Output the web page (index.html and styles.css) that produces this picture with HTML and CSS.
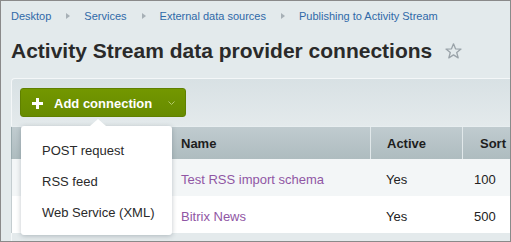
FILE: index.html
```html
<!DOCTYPE html>
<html>
<head>
<meta charset="utf-8">
<link rel="stylesheet" href="styles.css">
</head>
<body>
<div class="frame">
  <nav class="crumbs">
    <a class="crumb">Desktop</a><span class="sep"></span>
    <a class="crumb">Services</a><span class="sep"></span>
    <a class="crumb">External data sources</a><span class="sep"></span>
    <a class="crumb">Publishing to Activity Stream</a>
  </nav>
  <div class="title-row">
    <h1 class="title">Activity Stream data provider connections</h1>
    <svg class="star" width="17" height="16" viewBox="0 0 17 16"><path d="M8.5 0.8 L10.5 5.8 L16 6.1 L11.7 9.5 L13.2 14.9 L8.5 11.9 L3.8 14.9 L5.3 9.5 L1 6.1 L6.5 5.8 Z" fill="none" stroke="#9aa3a9" stroke-width="1.3" stroke-linejoin="round"/></svg>
  </div>
  <div class="panel">
    <div class="toolbar">
      <button class="add">
        <svg class="plus" width="11" height="11" viewBox="0 0 11 11"><path d="M4 0h3v4h4v3H7v4H4V7H0V4h4z" fill="#fff"/></svg>
        <span class="add-label">Add connection</span>
        <svg class="chev" width="7" height="4" viewBox="0 0 7 4"><polyline points="0.5,0.5 3.5,3.5 6.5,0.5" fill="none" stroke="#b3c96c" stroke-width="1"/></svg>
      </button>
    </div>
    <div class="table">
      <div class="row head">
        <div class="cell c0"></div>
        <div class="cell c-name">Name</div>
        <div class="cell c-active sepl">Active</div>
        <div class="cell c-sort sepl">Sort</div>
      </div>
      <div class="row odd">
        <div class="cell c0"></div>
        <div class="cell c-name"><a class="link">Test RSS import schema</a></div>
        <div class="cell c-active">Yes</div>
        <div class="cell c-num">100</div>
      </div>
      <div class="row even">
        <div class="cell c0"></div>
        <div class="cell c-name"><a class="link">Bitrix News</a></div>
        <div class="cell c-active">Yes</div>
        <div class="cell c-num">500</div>
      </div>
    </div>
    <div class="menu">
      <div class="item">POST request</div>
      <div class="item">RSS feed</div>
      <div class="item">Web Service (XML)</div>
    </div>
  </div>
</div>
</body>
</html>
```

FILE: styles.css
```css
html, body {
  margin: 0;
  padding: 0;
}
body {
  font-family: "Liberation Sans", Arial, sans-serif;
}
.frame {
  width: 511px;
  height: 242px;
  box-sizing: border-box;
  border: 1px solid #8a8a8a;
  background: #e3eaec;
  overflow: hidden;
  padding-left: 10px;
}
.crumbs {
  display: flex;
  align-items: center;
  padding-top: 8px;
  font-size: 11px;
  line-height: 14px;
}
.crumb {
  color: #2f69a8;
}
.sep {
  width: 0;
  height: 0;
  border-left: 4px solid #a7b0b6;
  border-top: 3.5px solid transparent;
  border-bottom: 3.5px solid transparent;
  margin: 0 14px 0 15px;
}
.title-row {
  display: flex;
  align-items: center;
  margin-top: 16px;
}
.title {
  margin: 0;
  font-size: 21px;
  line-height: 24px;
  font-weight: bold;
  color: #2a2a2a;
}
.star {
  margin-left: 13px;
}
.panel {
  position: relative;
  margin-top: 15px;
  border-top: 1px solid #f4f7f8;
  border-left: 1px solid #f4f7f8;
  border-top-left-radius: 4px;
  background: linear-gradient(#d8e1e4, #e4eaec 48px);
  height: 200px;
}
.toolbar {
  display: flex;
  padding: 9px 0 9px 8px;
}
.add {
  display: flex;
  align-items: center;
  height: 29px;
  width: 166px;
  box-sizing: border-box;
  padding: 1px 0 0 11px;
  border: 1px solid #5f8000;
  border-radius: 3px;
  background: linear-gradient(#739700, #678b00);
  color: #fff;
  font-family: "Liberation Sans", Arial, sans-serif;
  font-size: 13px;
  font-weight: bold;
  cursor: pointer;
}
.add-label {
  margin-left: 11px;
}
.chev {
  margin-left: 16px;
}
.table {
  margin-left: -1px;
}
.row {
  display: grid;
  grid-template-columns: 161px 198px 92px 1fr;
  font-size: 13px;
  line-height: 17px;
  color: #222;
}
.head {
  border-top: 1px solid #e8eef0;
  height: 32px;
  background: linear-gradient(#c0cbcf, #aebcbf);
  font-weight: bold;
  color: #1e1e1e;
}
.head .cell {
  padding-top: 8px;
}
.head .c0 {
  border-left: 1px solid #9aabaf;
}
.odd, .even {
  height: 37px;
}
.odd {
  background: #f3f6f7;
}
.even {
  background: #fff;
}
.odd .cell, .even .cell {
  padding-top: 12px;
}
.odd .c0, .even .c0 {
  border-left: 1px solid #c4cdd0;
}
.cell {
  box-sizing: border-box;
  white-space: nowrap;
}
.c-name {
  padding-left: 9px;
}
.c-active {
  padding-left: 16px;
}
.c-sort {
  padding-left: 17px;
}
.c-num {
  padding-left: 12px;
}
.sepl {
  border-left: 1px solid #e1e8ea;
}
.link {
  color: #9056a4;
}
.menu {
  position: absolute;
  left: 9px;
  top: 47px;
  width: 151px;
  height: 109px;
  box-sizing: border-box;
  padding: 9px 0 7px 0;
  background: #fff;
  border-radius: 3px;
  box-shadow: 0 1px 5px rgba(50, 70, 80, 0.3);
}
.menu::before {
  content: "";
  position: absolute;
  left: 69px;
  top: -7px;
  border-left: 8px solid transparent;
  border-right: 8px solid transparent;
  border-bottom: 7px solid #fff;
}
.item {
  padding-left: 21px;
  font-size: 13px;
  line-height: 31px;
  color: #2a2a2a;
}
```
